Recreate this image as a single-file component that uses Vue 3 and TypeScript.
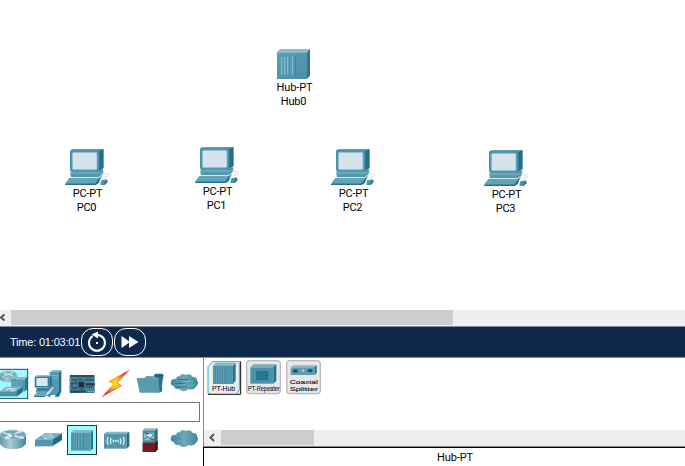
<script setup lang="ts">
interface DeviceNode {
  name: string
  model: string
  x: number
  y: number
}

const hub: DeviceNode = { name: 'Hub0', model: 'Hub-PT', x: 260, y: 40 }
const pcs: DeviceNode[] = [
  { name: 'PC0', model: 'PC-PT', x: 55, y: 140 },
  { name: 'PC1', model: 'PC-PT', x: 185, y: 138 },
  { name: 'PC2', model: 'PC-PT', x: 321, y: 140 },
  { name: 'PC3', model: 'PC-PT', x: 474, y: 141 },
]
</script>

<template>
  <div class="app">
    <svg class="defs" width="0" height="0">
      <defs>
        <linearGradient id="teal" x1="0" y1="0" x2="1" y2="1">
          <stop offset="0" stop-color="#5a9fb5" /><stop offset="1" stop-color="#4b8fa8" />
        </linearGradient>
        <linearGradient id="metal" x1="0" y1="0" x2="1" y2="0">
          <stop offset="0" stop-color="#5a9ab0" /><stop offset=".4" stop-color="#a9cbd6" /><stop offset="1" stop-color="#4487a0" />
        </linearGradient>
        <linearGradient id="cloud" x1="0" y1="0" x2="1" y2="0">
          <stop offset="0" stop-color="#3f86a0" /><stop offset=".5" stop-color="#6ba9bd" /><stop offset="1" stop-color="#3f86a0" />
        </linearGradient>
        <radialGradient id="fire">
          <stop offset="0" stop-color="#ffe90a" /><stop offset=".4" stop-color="#ffb012" /><stop offset="1" stop-color="#ee2a24" />
        </radialGradient>
      </defs>
    </svg>

    <main class="workspace">
      <div class="node hub" :style="{ left: hub.x + 'px', top: hub.y + 'px' }">
        <svg class="pic" viewBox="0 0 210 144">
          <path d="M51 37L60 27H150L141 37Z" fill="#8dbccb" />
          <path d="M141 37L150 27V107L141 117Z" fill="#2a7891" />
          <path d="M51 37H141V117H51Z" fill="url(#teal)" />
          <path d="M65 51V104M74 51V104M83 51V104M97 51V104" stroke="#a5cbd6" stroke-width="2.5" />
          <path d="M107 45V109" stroke="#39819a" stroke-width="2.5" />
        </svg>
        <span class="label model-label">{{ hub.model }}</span>
        <span class="label">{{ hub.name }}</span>
      </div>

      <div v-for="pc in pcs" :key="pc.name" class="node" :style="{ left: pc.x + 'px', top: pc.y + 'px' }">
        <svg class="pic" viewBox="0 0 210 144">
          <path d="M46 31L53 27H146L135 34Z" fill="#65a4b8" />
          <path d="M132 32L146 27V84L132 94Z" fill="#207089" />
          <rect x="45" y="30" width="88" height="63" rx="3" fill="#4b93aa" />
          <rect x="52" y="37" width="74" height="52" rx="4" fill="#d5e4ec" stroke="#81b4c5" stroke-width="2" />
          <path d="M47 94H132L144 88V96L130 105H54Z" fill="#237790" />
          <path d="M45 97H132L145 93V101L130 112H48Z" fill="#5199af" />
          <path d="M45 99H131L144 94" fill="none" stroke="#aacdd7" stroke-width="2" />
          <path d="M43 115H129L142 106L128 131L119 135H30Z" fill="#4d97ae" />
          <path d="M30 131H120L137 112L132 128L122 135H30Z" fill="#246f8a" />
          <path d="M43 115H129L121 129H31Z" fill="#66a3b7" />
          <path d="M141 101Q158 99 160 107Q154 115 145 111" fill="none" stroke="#c6dfe7" stroke-width="3" />
          <path d="M139 121L155 118L158 125L149 135H136Z" fill="#4b92aa" />
          <path d="M155 119L158 125L149 135L147 131Z" fill="#266f88" />
        </svg>
        <span class="label pc-label">{{ pc.model }}</span>
        <span class="label">{{ pc.name }}</span>
      </div>
    </main>

    <div class="scrollbar canvas-scroll">
      <div class="arrow-box"><svg viewBox="0 0 9 15"><path d="M4.5 4.5L1 7.5L4.5 10.5" /></svg></div>
      <div class="thumb"></div>
    </div>

    <div class="timebar">
      <span class="time">Time: 01:03:01</span>
      <button class="pill" aria-label="Power cycle devices">
        <svg viewBox="0 0 32 28">
          <path d="M20.3 8.1A8 8 0 1 1 11.6 8.1" fill="none" stroke="#fff" stroke-width="2.1" />
          <path d="M10.5 6.5L17 3.5V10.5Z" fill="#fff" /><path d="M15 7Q19 6.5 21 9" fill="none" stroke="#fff" stroke-width="2" />
          <rect x="15" y="14" width="2" height="2" fill="#fff" />
        </svg>
      </button>
      <button class="pill" aria-label="Fast forward">
        <svg viewBox="0 0 32 28"><path d="M7.500 8L16 14L7.500 20ZM15 8L24.500 14L15 20Z" fill="#fff" /></svg>
      </button>
    </div>

    <div class="bottom">
      <aside class="palette">
        <div class="row">
          <svg viewBox="-12 24 102 93">
            <rect x="-12" y="28" width="95" height="88" fill="#a0fafa" stroke="#174b56" stroke-width="3" />
            <path d="M0 44V57Q4 67 25 67Q46 67 50 56V44Z" fill="url(#metal)" />
            <ellipse cx="25" cy="43" rx="26" ry="10" fill="#79aabc" stroke="#bad6de" stroke-width="2" />
            <path d="M9 38L40 48M11 48L39 38" stroke="#e0f1f5" stroke-width="3" />
            <path d="M34 58L41 51H81L75 58Z" fill="#8abecc" /><path d="M75 58L81 51V88L75 94Z" fill="#267790" />
            <path d="M34 58H75V94H34Z" fill="#5298ae" /><path d="M42 63V87M48 63V87M54 63V87M61 61V90" stroke="#86b4c2" stroke-width="2" />
            <path d="M0 94L18 80H68L49 94Z" fill="#80b3c4" /><path d="M49 94L68 80V96L49 110Z" fill="#247187" />
            <path d="M0 94H49V109H0Z" fill="#4c92a8" /><path d="M16 91L26 87H48M20 86H39M32 92H45" stroke="#d0e7ed" stroke-width="3" fill="none" />
          </svg>
          <svg viewBox="90 24 102 93">
            <path d="M149 35L158 30H184L178 37Z" fill="#8bb8c7" /><path d="M177 37L184 31V94L177 110H165Z" fill="#236f88" />
            <path d="M149 36H177V91L169 105H149Z" fill="#5298b0" /><path d="M153 47H174M153 54H174" stroke="#a5cad6" stroke-width="2" />
            <path d="M104 50L110 46H155L148 51Z" fill="#7eafbf" /><rect x="104" y="50" width="45" height="33" fill="#347f98" />
            <rect x="109" y="54" width="34" height="24" rx="2" fill="#d6e7ee" /><path d="M149 51L155 47V76L149 83Z" fill="#226b83" />
            <path d="M111 84H145L151 80V90L144 95H108Z" fill="#388099" /><path d="M111 95H145L131 108H102Z" fill="#69a4b7" />
            <path d="M102 108H133L143 97V101L134 111H102Z" fill="#286f87" />
            <path d="M136 102L157 80L164 81L145 108Z" fill="#cee0e8" stroke="#397c94" stroke-width="2" /><path d="M145 103L155 98L158 102L149 110H142Z" fill="#4d8fa5" />
          </svg>
          <svg viewBox="192 24 102 93">
            <rect x="209" y="45" width="75" height="54" fill="#3f7791" />
            <path d="M212 48H282M212 95H256" stroke="#27333a" stroke-width="5" stroke-dasharray="4 1" />
            <path d="M263 94H282" stroke="#b0bdc6" stroke-width="4" stroke-dasharray="3 2" />
            <path d="M214 59H229V70H216V84H232M254 60H280M259 82H277M237 60H247M240 88H252" fill="none" stroke="#2f5b72" stroke-width="4" />
            <rect x="236" y="66" width="16" height="16" fill="#252c35" /><path d="M257 73H285" stroke="#263e4d" stroke-width="7" />
            <path d="M211 54H232M220 77H231M259 66H280M257 87H280M247 56H256" stroke="#8bb0bd" stroke-width="2" stroke-dasharray="3 3" />
            <path d="M210 56V65M209 78V86" stroke="#9da9b1" stroke-width="5" />
          </svg>
          <svg viewBox="-6 24 102 93">
            <path d="M88 30L25 64L39 72L6 110L64 77L51 68Z" fill="url(#fire)" />
            <path d="M88 30L51 68L64 77L6 110" fill="none" stroke="#ed3940" stroke-width="2" />
          </svg>
          <svg viewBox="96 24 102 93">
            <path d="M162 45L166 41H187L191 46L182 94L169 98Z" fill="#287189" />
            <path d="M165 47H189" stroke="#105e77" stroke-width="4" />
            <path d="M110 54H133L139 48H160L162 53H175L179 98H119Z" fill="#579bb0" /><path d="M111 55H134L140 50H159L162 55H176" fill="none" stroke="#80b2c1" stroke-width="2" />
            <path d="M179 98L187 66L186 94Z" fill="#22718b" />
          </svg>
          <svg viewBox="198 24 102 93">
            <path d="M229 56Q229 48 239 49Q244 39 257 44Q274 39 277 50Q293 51 292 64Q298 72 287 81Q280 92 266 87Q250 100 239 88Q221 88 222 78Q209 75 213 66Q213 55 229 56Z" fill="url(#cloud)" />
            <path d="M234 59H263M223 70H257M231 81H261" stroke="#24738e" stroke-width="3" /><path d="M249 65H280M264 76H282" stroke="#8cbccc" stroke-width="2" />
          </svg>
        </div>

        <input class="search" aria-label="Search devices" />

        <div class="row">
          <svg viewBox="-12 192 102 93">
            <path d="M0 224V251Q7 267 39 267Q70 267 78 251V224Z" fill="url(#metal)" />
            <ellipse cx="39" cy="224" rx="39" ry="14" fill="#73a9bc" stroke="#b4d2dd" stroke-width="2" />
            <path d="M9 218L35 226M42 222L63 214M36 228L18 233M44 228L70 233" stroke="#e6f1f5" stroke-width="4" />
            <path d="M27 219L36 227L22 227M51 213L64 213L61 219M17 229L16 235L29 235M59 234L72 234L65 228" stroke="#e6f1f5" stroke-width="3" fill="none" />
          </svg>
          <svg viewBox="90 192 102 93">
            <path d="M105 239L134 220H186L157 239Z" fill="#78adbd" /><path d="M157 239L186 220V240L157 259Z" fill="#1c6c84" />
            <path d="M105 239H157V259H105Z" fill="#5096ad" />
            <path d="M126 230L133 226H149M150 223L157 226L150 229M162 231H146M148 234L134 234M139 231L132 234L139 237" fill="none" stroke="#e1eef3" stroke-width="2" />
          </svg>
          <svg viewBox="192 192 102 93">
            <rect x="202.500" y="196.500" width="87" height="87" fill="#a0fdff" stroke="#153d48" stroke-width="3" />
            <path d="M213 218L221 210H279L272 218Z" fill="#85b8c7" /><path d="M272 218L279 210V265L272 272Z" fill="#287790" />
            <path d="M213 218H272V272H213Z" fill="#5599b1" /><path d="M219 223V266M226 223V266M233 223V266M241 223V266M250 221V268" stroke="#397f98" stroke-width="2" />
            <path d="M222 223V266M229 223V266M236 223V266M244 223V266" stroke="#84b2c2" stroke-width="1.500" />
          </svg>
          <svg viewBox="-6 192 102 93">
            <path d="M12 222L20 215H88L79 222Z" fill="#84b7c5" /><path d="M79 222L88 215V259L79 266Z" fill="#216f87" /><path d="M12 222H79V266H12Z" fill="#5297ad" />
            <g fill="none" stroke="#e4f4f5" stroke-width="3.500"><path d="M25 231Q18 243 25 255M34 234Q28 243 34 252M60 234Q66 243 60 252M69 231Q76 243 69 255M41 239Q37 243 41 247M53 239Q57 243 53 247" /><circle cx="47" cy="243" r="1.500" /></g>
          </svg>
          <svg viewBox="96 192 102 93">
            <path d="M128 211L134 205H173L165 211Z" fill="#8dbac8" /><path d="M165 211L173 205V269L165 276Z" fill="#247087" /><path d="M128 211H165V276H128Z" fill="#468ca4" />
            <path d="M128 248H165V276H128Z" fill="#741a20" /><path d="M165 248L173 242V269L165 276Z" fill="#471219" />
            <path d="M133 218H161V241H133Z" fill="#9fc5d0" /><ellipse cx="149" cy="226" rx="10" ry="6" fill="#e5f1f4" stroke="#1d637c" stroke-width="2" /><path d="M135 238L143 230M134 218L145 222M148 236L163 240" stroke="#14556f" stroke-width="3" />
          </svg>
          <svg viewBox="198 192 102 93">
            <path d="M229 224Q229 216 239 217Q244 207 257 212Q274 207 277 218Q293 219 292 232Q298 240 287 249Q280 260 266 255Q250 268 239 256Q221 256 222 246Q209 243 213 234Q213 223 229 224Z" fill="url(#cloud)" />
          </svg>
        </div>
      </aside>

      <section class="models">
        <div class="model-list">
          <svg class="models-pic" viewBox="12 24 360 114">
            <path d="M36 34H121V134H24V49Z" fill="#ececec" /><path d="M24 133H122V34" fill="none" stroke="#111" stroke-width="3" />
            <path d="M121 35H38L24 50V131H32M118 38V119L110 131" fill="none" stroke="#12bde0" stroke-width="3" />
            <path d="M39 47L48 38H107L99 47Z" fill="#84b6c5" /><path d="M99 47L107 38V92L99 102Z" fill="#26748d" /><path d="M39 47H99V102H39Z" fill="#5397ae" />
            <path d="M47 52V96M53 52V96M60 52V96M67 52V96M76 49V98" stroke="#3c829b" stroke-width="2" /><path d="M50 52V96M57 52V96M64 52V96M71 52V96" stroke="#79adbd" stroke-width="1.500" />
            <text x="36" y="124" textLength="69" lengthAdjust="spacingAndGlyphs">PT-Hub</text>
            <rect x="140" y="32" width="101" height="99" rx="10" fill="#e7e7e7" stroke="#bababa" stroke-width="4" />
            <path d="M151 52L160 43H229L220 52Z" fill="#7bafbf" /><path d="M220 52L229 43V92L220 101Z" fill="#246f88" /><path d="M151 52H220V101H151Z" fill="#4d91a9" /><rect x="169" y="63" width="36" height="27" fill="#1d7790" /><path d="M175 71H198M175 77H198M175 83H198" stroke="#2d8199" stroke-width="2" />
            <text x="144" y="124" textLength="95" lengthAdjust="spacingAndGlyphs">PT-Repeater</text>
            <rect x="260" y="32" width="101" height="99" rx="10" fill="#e7e7e7" stroke="#bababa" stroke-width="4" />
            <path d="M272 52L279 46H350L344 52Z" fill="#8dbbc8" /><path d="M272 52H344V75H272Z" fill="#5e9db2" /><path d="M344 52L350 46V68L344 75Z" fill="#236d84" />
            <ellipse cx="286" cy="63" rx="8" ry="5" fill="#174f65" /><ellipse cx="330" cy="62" rx="8" ry="5" fill="#174f65" /><circle cx="309" cy="62" r="4" fill="#a5cad5" />
            <text class="two-line" x="269" y="103" textLength="85" lengthAdjust="spacingAndGlyphs">Coaxial</text><text class="two-line" x="269" y="123" textLength="85" lengthAdjust="spacingAndGlyphs">Splitter</text>
          </svg>
        </div>
        <div class="scrollbar model-scroll">
          <div class="arrow-box"><svg viewBox="0 0 17 15"><path d="M10 4L6.500 7.500L10 11" /></svg></div>
          <div class="thumb"></div>
        </div>
        <footer class="selected"><span>Hub-PT</span></footer>
      </section>
    </div>
  </div>
</template>

<style>
body { margin: 0; background: #fff; }
</style>

<style scoped>
* { box-sizing: border-box; }
.app { width: 685px; height: 466px; overflow: hidden; display: flex; flex-direction: column; background: #fff; color: #000; font-family: Roboto, "Liberation Sans", sans-serif; font-size: 11px; }
.defs { position: absolute; }
svg { display: block; }
.workspace { height: 310px; position: relative; flex: none; }
.node { position: absolute; width: 70px; display: flex; flex-direction: column; align-items: center; }
.pic { width: 70px; height: 48px; margin-bottom: -1px; }
.label { height: 14px; line-height: 14px; white-space: nowrap; letter-spacing: -.25px; margin-right: 7px; }
.pc-label { margin-right: 5px; }
.hub .pic { margin-bottom: -7px; }
.hub .label { margin-right: 3px; }
.hub .model-label { margin-right: 1px; letter-spacing: -.1px; }
.scrollbar { display: flex; height: 15px; background: #efefef; flex: none; }
.thumb { background: #cdcdcd; height: 15px; }
.arrow-box path { fill: none; stroke: #555; stroke-width: 2; }
.canvas-scroll { height: 16px; }
.canvas-scroll .arrow-box { width: 11px; }
.canvas-scroll .arrow-box svg { width: 9px; height: 15px; }
.canvas-scroll .thumb { width: 442px; }
.timebar { height: 32px; flex: none; display: flex; align-items: center; background: #0e284c; border-top: 1px solid #858b99; border-bottom: 1px solid #858b99; padding-left: 10px; }
.time { width: 71px; color: #fff; white-space: nowrap; font-family: "Liberation Sans", sans-serif; letter-spacing: -.2px; }
.pill { width: 32px; height: 28px; padding: 0; margin-right: 1px; border: 1px solid #fff; border-radius: 12px; background: transparent; }
.pill svg { width: 32px; height: 28px; margin: -1px; }
.bottom { flex: 1; display: flex; min-height: 0; }
.palette { width: 203px; display: flex; flex-direction: column; overflow: hidden; padding-top: 10px; }
.row { display: flex; margin-left: -4px; }
.row svg { width: 34px; height: 31px; flex: none; }
.search { width: 201px; height: 20px; margin: 3px 0 2px -1px; padding: 0 3px; border: 1px solid #747478; background: #fff; outline: 0; flex: none; }
.models { flex: 1; display: flex; flex-direction: column; }
.model-list { height: 72px; border-left: 1px solid #88878e; }
.models-pic { width: 120px; height: 38px; }
.models-pic text { font-family: "Liberation Sans", sans-serif; font-size: 22px; fill: #111; stroke: #111; stroke-width: .3px; }
.models-pic .two-line { font-size: 17px; }
.model-scroll { height: 17px; border-left: 1px solid #88878e; border-bottom: 1px solid #88878e; }
.model-scroll .arrow-box { width: 17px; }
.model-scroll .arrow-box svg { width: 17px; height: 15px; }
.model-scroll .thumb { width: 93px; }
.selected { flex: 1; border-top: 1px solid #000; border-left: 1px solid #000; text-align: center; padding: 3px 0 0 21px; line-height: 14px; letter-spacing: -.1px; }
</style>
